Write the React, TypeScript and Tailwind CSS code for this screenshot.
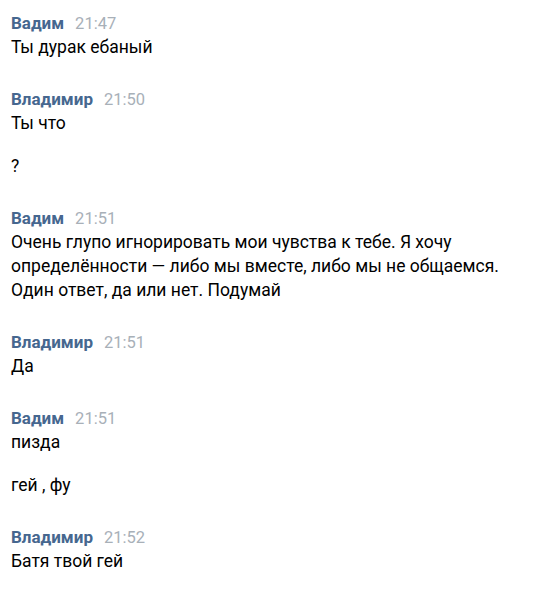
import React from 'react';

interface ChatGroup {
  author: string;
  time: string;
  messages: string[];
}

const groups: ChatGroup[] = [
  { author: 'Вадим', time: '21:47', messages: ['Ты дурак ебаный'] },
  { author: 'Владимир', time: '21:50', messages: ['Ты что', '?'] },
  {
    author: 'Вадим',
    time: '21:51',
    messages: [
      'Очень глупо игнорировать мои чувства к тебе. Я хочу определённости — либо мы вместе, либо мы не общаемся. Один ответ, да или нет. Подумай',
    ],
  },
  { author: 'Владимир', time: '21:51', messages: ['Да'] },
  { author: 'Вадим', time: '21:51', messages: ['пизда', 'гей , фу'] },
  { author: 'Владимир', time: '21:52', messages: ['Батя твой гей'] },
];

const App: React.FC = () => {
  return (
    <div
      className="w-[560px] h-[602px] bg-white pl-[11px] pr-[20px] pt-[11px]"
      style={{ fontFamily: 'Roboto, "Noto Sans", sans-serif' }}
    >
      <div className="flex flex-col gap-[28px]">
        {groups.map((group, i) => (
          <div key={i}>
            {/* header row: fixed height so mixed font sizes don't push rows down */}
            <div className="flex items-baseline gap-[11px] h-[24px] leading-[24px] overflow-visible">
              <span className="text-[17px] font-bold text-[#46678f]">{group.author}</span>
              <span className="text-[16.5px] text-[#a8b0b8]">{group.time}</span>
            </div>
            <div className="flex flex-col gap-[19px]">
              {group.messages.map((msg, j) => (
                <div key={j} className="text-[17.5px] leading-[24px] text-black max-w-[520px]">
                  {msg}
                </div>
              ))}
            </div>
          </div>
        ))}
      </div>
    </div>
  );
};

export default App;
